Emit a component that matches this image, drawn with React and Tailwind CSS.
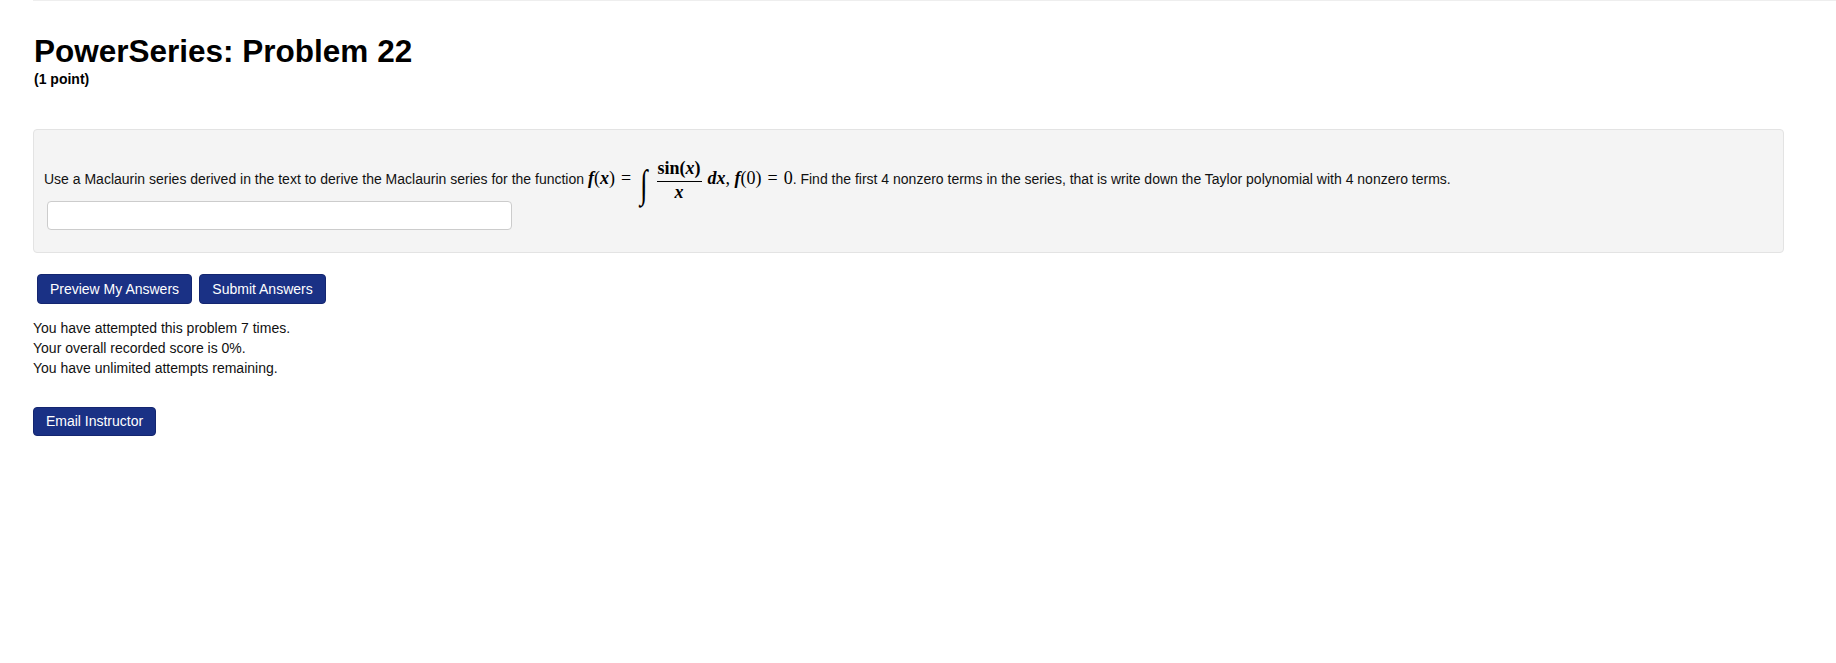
import React from "react";

function Fraction() {
  return (
    <span className="inline-block align-[-14px] text-center mx-[6px] leading-none">
      <span className="block px-[1px] pb-[4px] font-bold">
        sin(<i className="font-bold">x</i>)
      </span>
      <span className="block border-t border-black" />
      <span className="block pt-[1px] font-bold">
        <i>x</i>
      </span>
    </span>
  );
}

function MathExpr() {
  return (
    <span className="font-['Liberation_Serif',serif] text-[18px] text-black">
      <i className="font-bold">f</i>(<i className="font-bold">x</i>)
      <span className="mx-[6px]">=</span>
      <span className="mx-[3px] inline-block origin-center align-[-9px] text-[27px] leading-none scale-y-[1.45] italic">∫</span>
      <Fraction />
      <i className="font-bold">dx</i>, <i className="font-bold">f</i>(0)
      <span className="mx-[6px]">=</span>0
    </span>
  );
}

export default function App() {
  return (
    <div className="min-h-screen bg-white font-['Liberation_Sans',Arial,sans-serif] text-black">
      <div className="ml-[33px] border-t border-[#eeeeee]" />

      <div className="pl-[34px] pt-[30px]">
        <h2 className="text-[31.5px] leading-[40px] font-bold">PowerSeries: Problem 22</h2>
        <div className="text-[14px] leading-[16px] font-bold">(1 point)</div>
      </div>

      <div className="ml-[33px] mt-[42px] w-[1751px] rounded-[4px] border border-[#e3e3e3] bg-[#f4f4f4] px-[10px] pt-[29px] pb-[22px]">
        <p className="text-[14px] leading-[20px] text-[#111]">
          Use a Maclaurin series derived in the text to derive the Maclaurin series for the function{" "}
          <MathExpr />. Find the first 4 nonzero terms in the series, that is write down the Taylor polynomial with 4 nonzero terms.
        </p>
        <input
          type="text"
          className="ml-[3px] block h-[29px] w-[465px] rounded-[4px] border border-[#cccccc] bg-white px-2 text-[14px] outline-none"
        />
      </div>

      <div className="ml-[37px] mt-[21px] flex gap-[7px]">
        <button className="h-[30px] w-[155px] rounded-[4px] border border-[#142670] bg-[#1a3185] text-[14px] text-white">
          Preview My Answers
        </button>
        <button className="h-[30px] w-[127px] rounded-[4px] border border-[#142670] bg-[#1a3185] text-[14px] text-white">
          Submit Answers
        </button>
      </div>

      <div className="ml-[33px] mt-[14px] text-[14px] leading-[20px] text-[#111]">
        <div>You have attempted this problem 7 times.</div>
        <div>Your overall recorded score is 0%.</div>
        <div>You have unlimited attempts remaining.</div>
      </div>

      <div className="ml-[33px] mt-[29px]">
        <button className="h-[29px] w-[123px] rounded-[4px] border border-[#142670] bg-[#1a3185] text-[14px] text-white">
          Email Instructor
        </button>
      </div>
    </div>
  );
}
